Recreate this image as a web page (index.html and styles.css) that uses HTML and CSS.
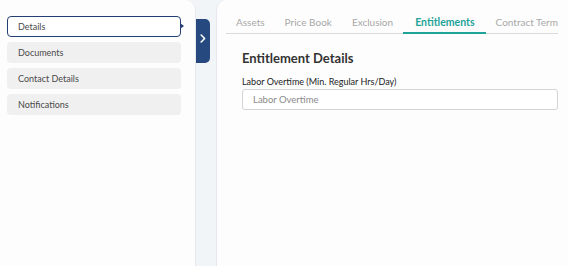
FILE: index.html
```html
<!DOCTYPE html>
<html>
<head>
<meta charset="utf-8">
<link rel="stylesheet" href="styles.css">
</head>
<body>
<div class="layout">
  <aside class="side">
    <nav class="menu">
      <div class="menu-item active">Details</div>
      <div class="menu-item">Documents</div>
      <div class="menu-item">Contact Details</div>
      <div class="menu-item">Notifications</div>
    </nav>
  </aside>
  <div class="gutter">
    <button class="toggle" aria-label="Expand">
      <svg width="6" height="9" viewBox="0 0 6 9"><path d="M1.2 1 L4.6 4.5 L1.2 8" fill="none" stroke="#fff" stroke-width="1.6" stroke-linecap="round" stroke-linejoin="round"/></svg>
    </button>
  </div>
  <main class="main">
    <div class="tabs">
      <div class="tab">Assets</div>
      <div class="tab">Price Book</div>
      <div class="tab">Exclusion</div>
      <div class="tab active">Entitlements</div>
      <div class="tab">Contract Term</div>
    </div>
    <section class="content">
      <h2 class="title">Entitlement Details</h2>
      <label class="label">Labor Overtime (Min. Regular Hrs/Day)</label>
      <input class="input" type="text" placeholder="Labor Overtime">
    </section>
  </main>
</div>
</body>
</html>
```
FILE: styles.css
```css
html, body {
  margin: 0;
  padding: 0;
  height: 100%;
}
body {
  background: #f2f5f8;
  font-family: "Lato", "Inter", sans-serif;
  color: #333;
}
.layout {
  display: flex;
  height: 266px;
}
.side {
  width: 196px;
  flex: none;
  background: #fdfdfd;
  border-top-right-radius: 10px;
  border-right: 1px solid #e6e9ed;
  box-sizing: border-box;
  padding: 16px 14px 0 7px;
}
.menu {
  display: flex;
  flex-direction: column;
  gap: 5px;
}
.menu-item {
  height: 21px;
  box-sizing: border-box;
  background: #f0f0f0;
  border-radius: 4px;
  padding-left: 11px;
  font-size: 9px;
  line-height: 21px;
  color: #4a4a4a;
  position: relative;
}
.menu-item.active {
  background: #fff;
  border: 1px solid #243f73;
  line-height: 19px;
  padding-left: 10px;
}
.menu-item.active::after {
  content: "";
  position: absolute;
  right: -4px;
  top: 6px;
  border-left: 4px solid #243f73;
  border-top: 3px solid transparent;
  border-bottom: 3px solid transparent;
}
.gutter {
  width: 20px;
  flex: none;
  padding-top: 19px;
  box-sizing: border-box;
}
.toggle {
  display: flex;
  align-items: center;
  justify-content: center;
  width: 14px;
  height: 44px;
  padding: 0 0 6px 0;
  margin: 0;
  border: none;
  background: #264a80;
  border-radius: 0 5px 5px 0;
}
.main {
  flex: 1;
  min-width: 0;
  background: #fdfdfd;
  border-top-left-radius: 10px;
  border-left: 1px solid #e6e9ed;
  padding: 12px 10px 0 9px;
  box-sizing: border-box;
}
.tabs {
  display: flex;
  border-bottom: 1px solid #dcdcdc;
}
.tab {
  padding: 0 10px;
  height: 21px;
  line-height: 20px;
  font-size: 10px;
  color: #a8a8a8;
  box-sizing: border-box;
  white-space: nowrap;
  flex: none;
}
.tab.active {
  color: #1ea399;
  font-weight: 700;
  font-size: 10.5px;
  padding: 0 11px 0 12px;
  border-bottom: 2px solid #1ea399;
  margin-bottom: -1px;
  height: 22px;
}
.content {
  padding: 16px 0 0 16px;
  display: flex;
  flex-direction: column;
}
.title {
  margin: 0 0 10px 0;
  font-size: 13px;
  font-weight: 700;
  color: #333;
  line-height: 16px;
}
.label {
  font-size: 9px;
  color: #222;
  line-height: 11px;
  margin-bottom: 2px;
}
.input {
  height: 21px;
  box-sizing: border-box;
  border: 1px solid #d4d4d4;
  border-radius: 3px;
  padding: 0 10px;
  font-family: inherit;
  font-size: 9.5px;
  background: #fff;
  outline: none;
}
.input::placeholder {
  color: #8a8a8a;
}
```
